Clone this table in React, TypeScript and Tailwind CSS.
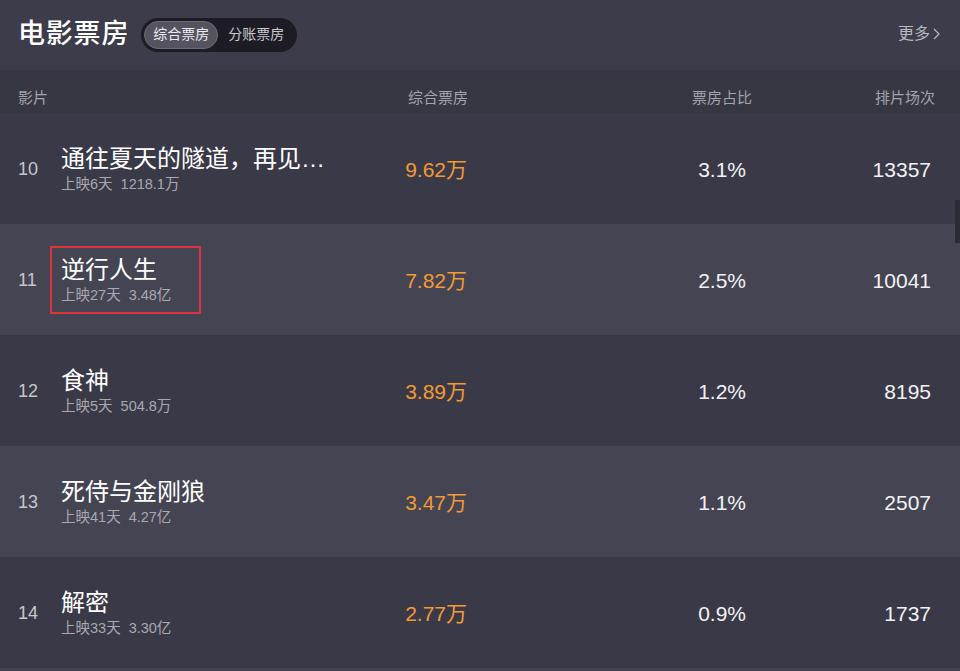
import React from "react";

const rows = [
  { n: 10, name: "通往夏天的隧道，再见…", days: "上映6天", total: "1218.1万", box: "9.62万", pct: "3.1%", cnt: "13357", light: false, hl: false },
  { n: 11, name: "逆行人生", days: "上映27天", total: "3.48亿", box: "7.82万", pct: "2.5%", cnt: "10041", light: true, hl: true },
  { n: 12, name: "食神", days: "上映5天", total: "504.8万", box: "3.89万", pct: "1.2%", cnt: "8195", light: false, hl: false },
  { n: 13, name: "死侍与金刚狼", days: "上映41天", total: "4.27亿", box: "3.47万", pct: "1.1%", cnt: "2507", light: true, hl: false },
  { n: 14, name: "解密", days: "上映33天", total: "3.30亿", box: "2.77万", pct: "0.9%", cnt: "1737", light: false, hl: false },
];

export default function App() {
  return (
    <div
      className="relative w-[960px] h-[671px] overflow-hidden bg-[#444352]"
      style={{ fontFamily: '"Liberation Sans", "Noto Sans CJK SC", sans-serif' }}
    >
      {/* top header */}
      <div className="h-[70px] bg-[#3d3c4a] flex items-center pl-[18px] pr-[20px]">
        <div className="text-[27px] leading-none text-white font-medium tracking-[0.8px] -mt-[2px]">电影票房</div>
        <div className="ml-[12px] h-[34px] rounded-full bg-[#1d1c24] flex items-center p-[3px] -mt-[1px]">
          <div className="h-[28px] px-[8px] rounded-full bg-[#54535f] border border-[#6a6975] flex items-center text-[14px] text-[#ececf0]">
            综合票房
          </div>
          <div className="h-[28px] px-[10px] flex items-center text-[14px] text-[#c9c9cf]">分账票房</div>
        </div>
        <div className="ml-auto flex items-center gap-[3px] text-[16px] text-[#b9b9c1] -mt-[3px]">
          <span>更多</span>
          <svg width="7" height="12" viewBox="0 0 7 12" fill="none">
            <path d="M1 1l5 5-5 5" stroke="#b9b9c1" strokeWidth="1.2" />
          </svg>
        </div>
      </div>

      {/* column header */}
      <div className="h-[43px] bg-[#373643] grid grid-cols-[43px_270px_137px_284px_183px] pl-[18px] pt-[17px] text-[15px] leading-[22px] text-[#a3a3ab]">
        <div className="col-span-2">影片</div>
        <div className="text-right">综合票房</div>
        <div className="text-right">票房占比</div>
        <div className="text-right">排片场次</div>
      </div>

      {/* rows */}
      {rows.map((r) => (
        <div
          key={r.n}
          className={`h-[111px] grid grid-cols-[43px_270px_136px_279px_185px] items-center pl-[18px] ${
            r.light ? "bg-[#454453]" : "bg-[#3a3947]"
          }`}
        >
          <div className="text-[18px] text-[#c6c6cd] pt-[2px]">{r.n}</div>
          <div className="relative flex flex-col">
            {r.hl && (
              <div className="absolute -left-[11px] -top-[9px] w-[151px] h-[68px] border-2 border-[#d8353d]" />
            )}
            <div className="text-[24px] leading-[30px] text-white whitespace-nowrap">{r.name}</div>
            <div className="text-[14.5px] leading-[20px] text-[#a9a9b1] whitespace-nowrap">
              {r.days}
              <span className="ml-[8px]">{r.total}</span>
            </div>
          </div>
          <div className="text-right text-[21px] text-[#f39a34] pt-[2px]">{r.box}</div>
          <div className="text-right text-[21px] text-[#f2f2f5] pt-[2px]">{r.pct}</div>
          <div className="text-right text-[21px] text-[#f2f2f5] pt-[2px]">{r.cnt}</div>
        </div>
      ))}

      {/* scrollbar */}
      <div className="absolute right-0 top-[200px] w-[5px] h-[43px] bg-[#2b2a35]" />
    </div>
  );
}
